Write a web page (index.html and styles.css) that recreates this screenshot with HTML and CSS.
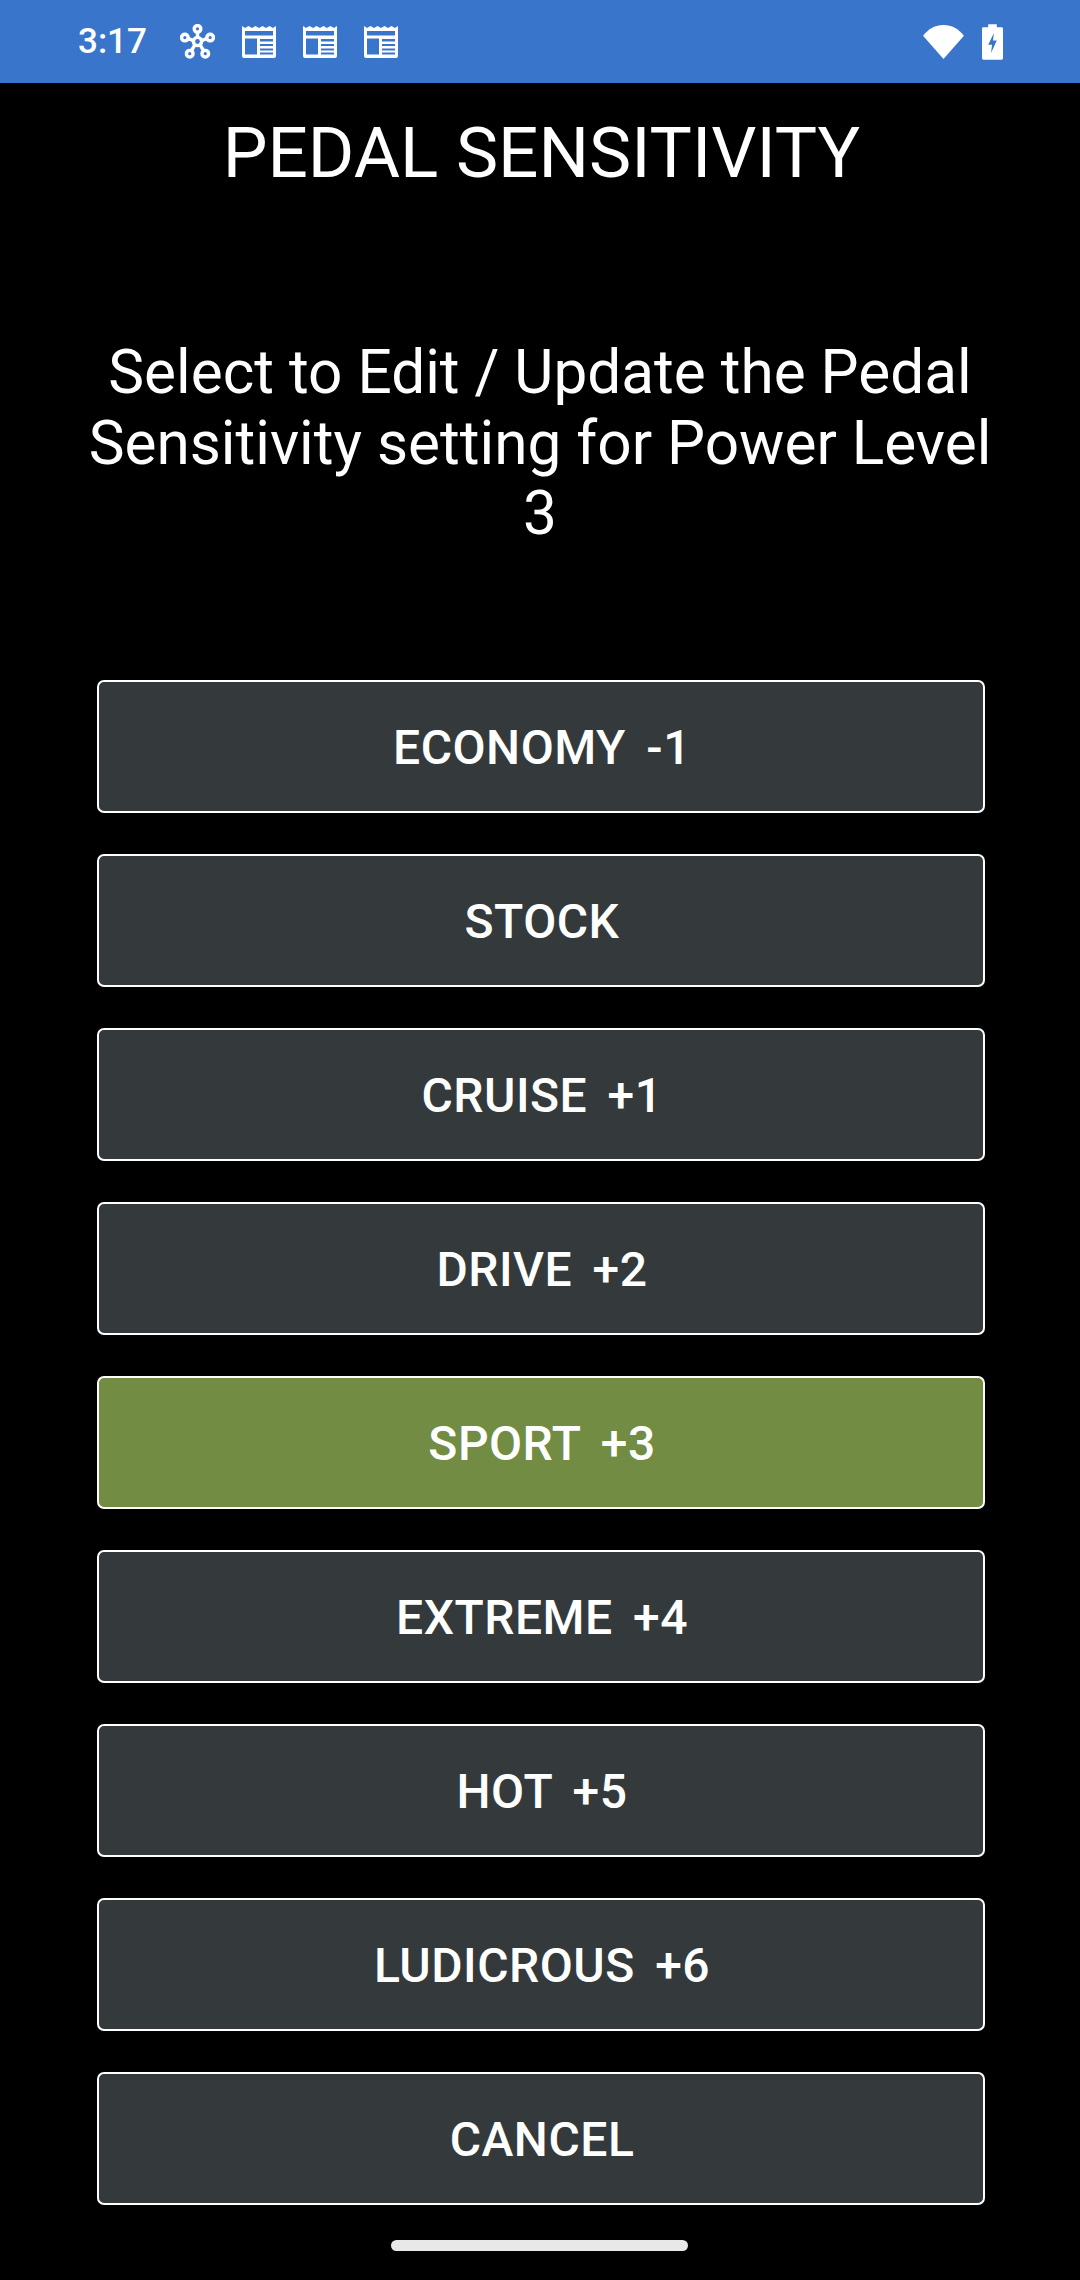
FILE: index.html
```html
<!DOCTYPE html>
<html lang="en">
  <head>
    <meta charset="UTF-8" />
    <title>Pedal Sensitivity</title>
    <link rel="stylesheet" href="styles.css">
  </head>
  <body>
    <header class="status-bar">
      <span class="clock">3:17</span>
      <div class="notif-icons">
        <svg class="icon-hub" viewBox="0 0 36 36" width="35" height="35">
          <g fill="none" stroke="#fff" stroke-width="3.500">
            <circle cx="18" cy="18" r="4.200" />
            <circle cx="18" cy="5" r="3.400" />
            <circle cx="5" cy="14" r="3.400" />
            <circle cx="31" cy="14" r="3.400" />
            <circle cx="10" cy="30.500" r="3.400" />
            <circle cx="26" cy="30.500" r="3.400" />
            <path d="M18 9v5M8.500 15l5.500 2M27.500 15l-5.500 2M12 27l3-5M24 27l-3-5" />
          </g>
        </svg>
        <svg viewBox="0 0 34 32" width="34" height="32">
          <use href="#news" />
        </svg>
        <svg viewBox="0 0 34 32" width="34" height="32">
          <use href="#news" />
        </svg>
        <svg viewBox="0 0 34 32" width="34" height="32">
          <use href="#news" />
        </svg>
      </div>
      <div class="system-icons">
        <svg viewBox="0 0 42 35" width="41" height="34">
          <path fill="#fff" d="M0 11C5.500 4 12.500 0 21 0s15.500 4 21 11L21 35z" />
        </svg>
        <svg viewBox="0 0 22 37" width="21" height="36">
          <path fill="#fff" fill-rule="evenodd" d="M6.500 0h9v3h5Q22 3 22 4.500V35.500Q22 37 20.500 37H1.500Q0 37 0 35.500V4.500Q0 3 1.500 3h5zM12.500 9L6.500 21.500h4L9.500 30l6-13h-4z" />
        </svg>
      </div>
    </header>

    <main>
      <h1 class="title">PEDAL SENSITIVITY</h1>
      <p class="prompt">Select to Edit / Update the Pedal Sensitivity setting for Power Level 3</p>
      <div class="options">
        <button type="button" class="option">ECONOMY -1</button>
        <button type="button" class="option">STOCK</button>
        <button type="button" class="option">CRUISE +1</button>
        <button type="button" class="option">DRIVE +2</button>
        <button type="button" class="option selected">SPORT +3</button>
        <button type="button" class="option">EXTREME +4</button>
        <button type="button" class="option">HOT +5</button>
        <button type="button" class="option">LUDICROUS +6</button>
        <button type="button" class="option">CANCEL</button>
      </div>
    </main>

    <div class="home-bar"></div>

    <svg class="defs" width="0" height="0">
      <defs>
        <path id="news" fill="#fff" fill-rule="evenodd" d="M0 0l3 2 3.500-2 3.500 2 3.500-2 3.500 2 3.500-2 3.500 2 3.500-2 3.500 2L34 0V30q0 2-2 2H2q-2 0-2-2zM3 5v4.500h28V5zM3 12.500V28.500H15V12.500zM18 13v2.500H31V13zM18 18v2H31v-2zM18 22.500v2H31v-2zM18 26.500v2H31v-2z" />
      </defs>
    </svg>
  </body>
</html>
```

FILE: styles.css
```css
body {
  margin: 0;
  width: 1080px;
  height: 2280px;
  overflow: hidden;
  position: relative;
  background: #000;
  color: #fff;
  font-family: "Roboto", sans-serif;
}
.status-bar {
  height: 83px;
  background: #3a75cc;
  display: flex;
  align-items: center;
  padding: 0 77px 0 78px;
}
.clock {
  font-size: 35px;
  font-weight: 500;
  width: 102px;
}
.notif-icons {
  display: flex;
  align-items: center;
  gap: 27px;
  flex: 1;
}
.system-icons {
  display: flex;
  align-items: center;
  gap: 18px;
}
.defs {
  position: absolute;
}
.title {
  margin: 0;
  padding: 28px 0 0 3px;
  font-size: 71px;
  font-weight: 400;
  line-height: 84px;
  text-align: center;
}
.prompt {
  margin: 143px auto 0;
  width: 930px;
  font-size: 60.300px;
  line-height: 70.500px;
  text-align: center;
}
.options {
  margin: 130px 95px 0 97px;
  display: flex;
  flex-direction: column;
  gap: 41px;
}
.option {
  height: 133px;
  background: #343a3b;
  border: 2px solid #fff;
  border-radius: 7px;
  color: #fff;
  font-family: "Roboto", sans-serif;
  font-size: 48px;
  font-weight: 500;
  letter-spacing: 0.500px;
  word-spacing: 8px;
  padding: 2px 0 0 2px;
}
.selected {
  background: #728c44;
}
.home-bar {
  position: absolute;
  left: 391px;
  top: 2240px;
  width: 297px;
  height: 11px;
  border-radius: 6px;
  background: #e8e8e8;
}
```
